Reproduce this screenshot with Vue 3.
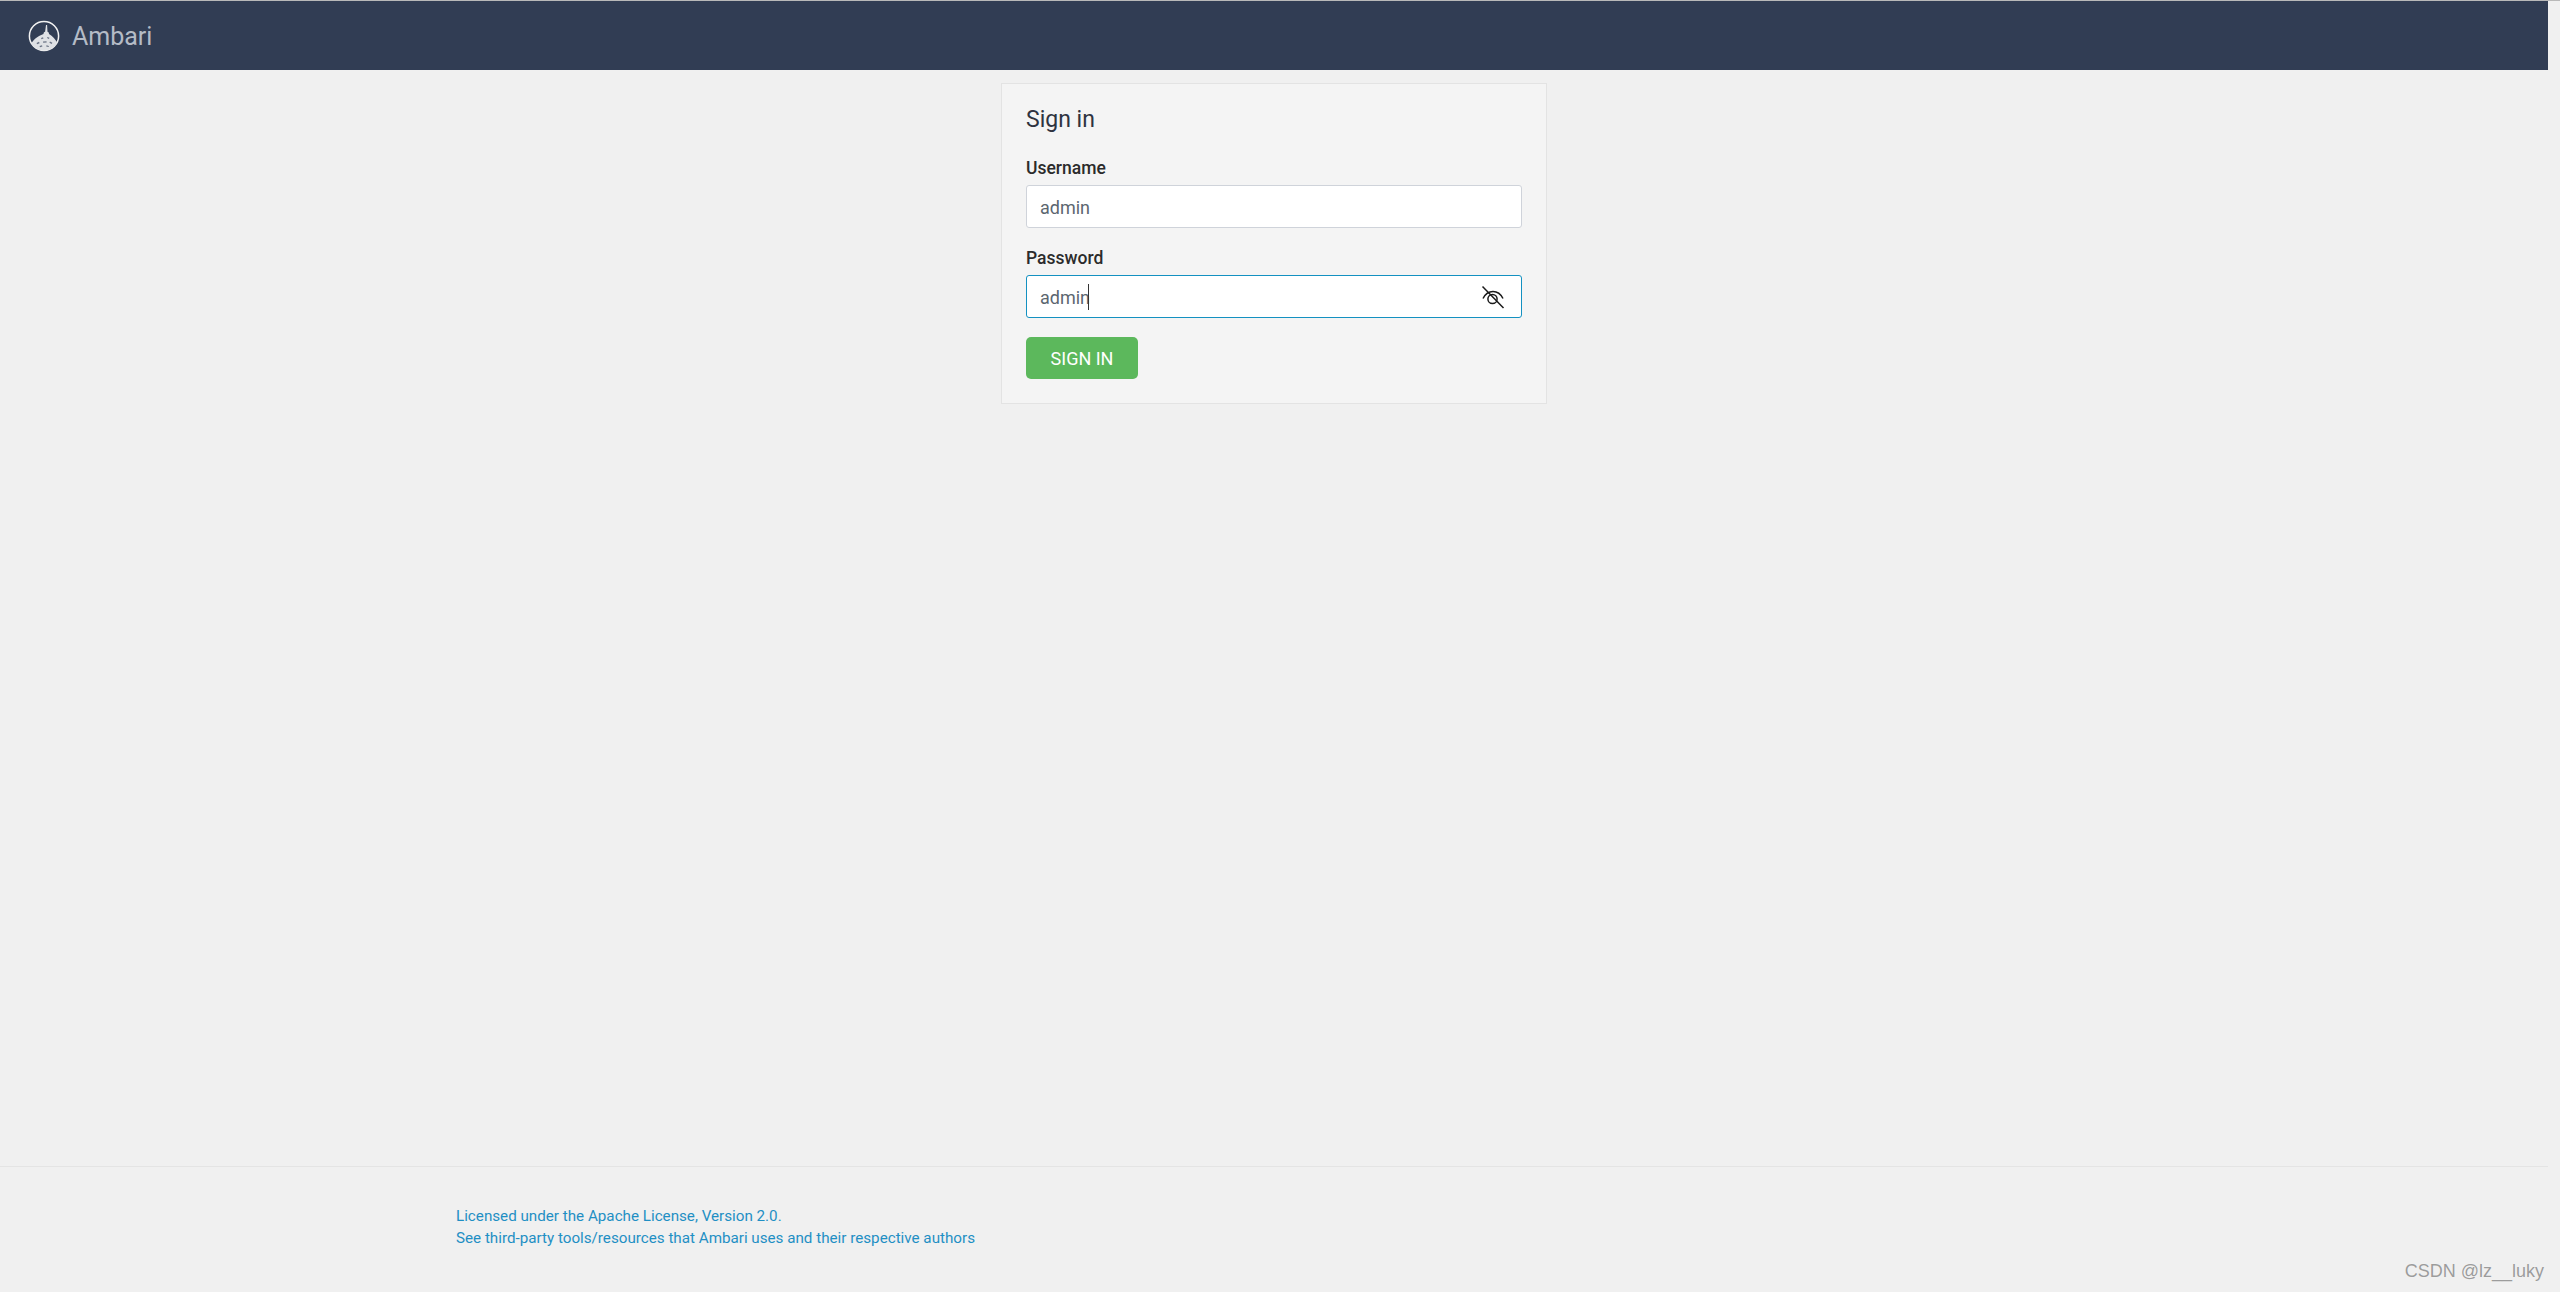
<template>
  <div class="page">
    <header class="top-bar">
      <svg class="logo" width="32" height="32" viewBox="0 0 32 32">
        <clipPath id="logo-clip"><circle cx="16" cy="16" r="14.600" /></clipPath>
        <circle cx="16" cy="16" r="14.600" fill="none" stroke="#f2f2f2" stroke-width="1.500" />
        <g clip-path="url(#logo-clip)">
          <path d="M18 5h1.100l.4 6.800c1 .4 1.500 1.100 1.500 2.100 3.500 2 6.500 5.500 9 10.100V32H2v-6.500C5 20 9 16 15.500 13.900c0-1 .5-1.700 1.600-2.100z" fill="#dfe1e5" />
          <path d="M13 18l2-.8.500 1.200-2 .9zM19.500 17l2 .8-.6 1.200-1.900-.9zM8.500 23l2.500-1.200.6 1.400-2.400 1.100zM15 21.500l3.500-.2.200 1.300-3.500.2zM22 21.500l2.400 1.200-.7 1.200-2.300-1.100zM11.500 26l2.500-.7.400 1.200-2.300.7zM18.500 25.300l2.500.6-.4 1.200-2.400-.6z" fill="#6a7385" />
        </g>
      </svg>
      <span class="brand">Ambari</span>
    </header>

    <main class="content">
      <form class="login-card" @submit.prevent>
        <h3 class="card-title">Sign in</h3>

        <div class="form-group">
          <label for="username">Username</label>
          <input id="username" v-model="username" type="text" class="form-input" />
        </div>

        <div class="form-group">
          <label for="password">Password</label>
          <div class="input-wrap">
            <input id="password" v-model="password" type="text" class="form-input focused" />
            <span class="caret"></span>
            <svg class="eye-off" width="24" height="24" viewBox="0 0 24 24" fill="none" stroke="#1a1a1a">
              <path d="M2 13.500C4.500 8.500 8 6.500 12 6.500s7.500 2 10 7" stroke-width="1.500" />
              <circle cx="11.500" cy="14" r="4.600" stroke-width="1.500" />
              <path d="M1.500 1.500L22.500 23" stroke-width="1.500" />
            </svg>
          </div>
        </div>

        <button type="submit" class="btn-signin">SIGN IN</button>
      </form>
    </main>

    <footer class="footer">
      <a href="#">Licensed under the Apache License, Version 2.0.</a>
      <a href="#">See third-party tools/resources that Ambari uses and their respective authors</a>
    </footer>

    <div class="watermark">CSDN @lz__luky</div>
  </div>
</template>

<script setup>
import { ref } from 'vue'

const username = ref('admin')
const password = ref('admin')
</script>

<style>
body {
  background: #f0f0f0;
}
</style>

<style scoped>
.page {
  position: relative;
  width: 2560px;
  height: 1292px;
  overflow: hidden;
  display: flex;
  flex-direction: column;
  background: #f0f0f0;
  border-top: 1px solid #b9b9b9;
  box-sizing: border-box;
  font-family: Roboto, "Liberation Sans", sans-serif;
}

.top-bar {
  width: 2548px;
  height: 69px;
  flex-shrink: 0;
  box-sizing: border-box;
  padding-left: 28px;
  display: flex;
  align-items: center;
  background: #313d54;
}

.logo {
  margin-top: 1px;
}

.brand {
  margin-top: 2px;
  margin-left: 12px;
  color: #b4bbc6;
  font-size: 25px;
  line-height: 30px;
}

.content {
  flex: 1;
  width: 2548px;
  display: flex;
  justify-content: center;
  align-items: flex-start;
  padding-top: 13px;
  box-sizing: border-box;
}

.login-card {
  width: 546px;
  height: 321px;
  box-sizing: border-box;
  padding: 21px 24px 0;
  background: #f4f4f4;
  border: 1px solid #e3e3e3;
}

.card-title {
  margin: 0 0 21px;
  color: #2e3340;
  font-size: 23px;
  font-weight: 400;
  line-height: 30px;
}

.form-group {
  margin-bottom: 18px;
}

.form-group label {
  display: block;
  margin-bottom: 5px;
  color: #2b2b2b;
  font-size: 17.500px;
  font-weight: 500;
  line-height: 24px;
}

.input-wrap {
  position: relative;
}

.form-input {
  display: block;
  width: 100%;
  height: 43px;
  box-sizing: border-box;
  padding: 1px 13px 0;
  background: #fff;
  border: 1px solid #cfd3da;
  border-radius: 3px;
  color: #5c6670;
  font-family: inherit;
  font-size: 18px;
  outline: none;
}

.form-input.focused {
  border: 1px solid #1491c1;
}

.caret {
  position: absolute;
  left: 62px;
  top: 9px;
  width: 1px;
  height: 26px;
  background: #333;
}

.eye-off {
  position: absolute;
  right: 17px;
  top: 10px;
}

.btn-signin {
  display: block;
  width: 112px;
  height: 42px;
  margin-top: 19px;
  padding: 0;
  background: #5cb85c;
  border: none;
  border-radius: 5px;
  color: #fff;
  font-family: inherit;
  font-size: 18px;
  font-weight: 400;
}

.form-group + .btn-signin {
  margin-top: 19px;
}

.footer {
  width: 2548px;
  height: 126px;
  flex-shrink: 0;
  box-sizing: border-box;
  padding: 38px 0 0 456px;
  display: flex;
  flex-direction: column;
  border-top: 1px solid #e4e4e4;
}

.footer a {
  color: #1f8fc4;
  font-size: 15.200px;
  line-height: 22px;
  text-decoration: none;
}

.watermark {
  position: absolute;
  right: 16px;
  bottom: 10px;
  color: #9c9c9c;
  font-family: "Liberation Sans", sans-serif;
  font-size: 18px;
  text-shadow: 0 0 1px rgba(255, 255, 255, 0.7);
}
</style>
